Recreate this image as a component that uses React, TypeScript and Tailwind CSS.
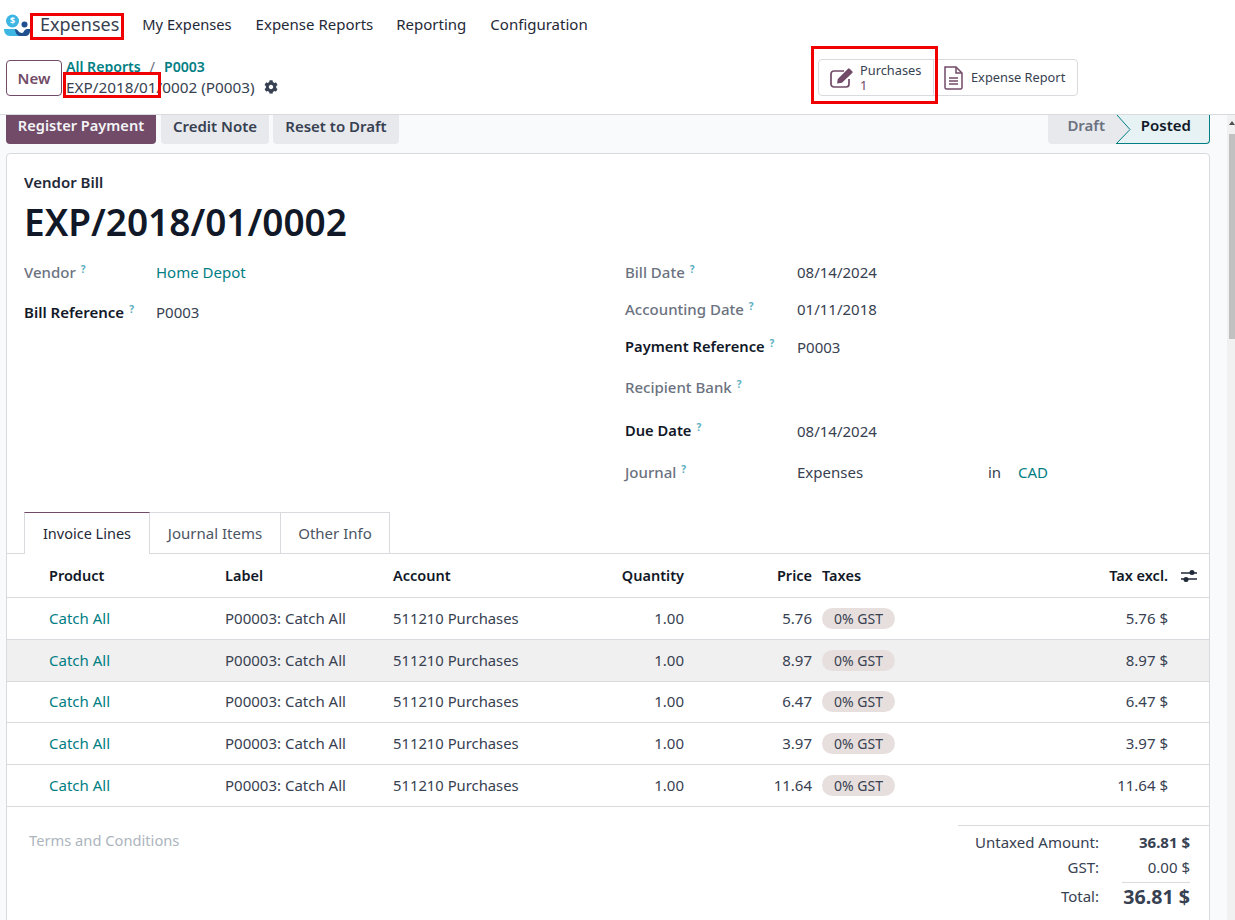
const F = "font-['Noto_Sans',sans-serif]";
const COLS = "grid-cols-[42px_176px_168px_193px_98px_128px_10px_200px_146px_41px]";

function Help() {
  return <sup className="relative -top-[5px] ml-[5px] text-[10px] font-bold text-[#5aaec0]">?</sup>;
}

function Logo() {
  return (
    <svg width="26" height="22" viewBox="0 0 26 22" className="mt-[2px] shrink-0">
      <circle cx="8.500" cy="7" r="6.500" fill="#3db6e3" />
      <text x="8.500" y="10" fontSize="9" fontWeight="700" fill="#fff" textAnchor="middle" fontFamily="Noto Sans">$</text>
      <circle cx="20.500" cy="10.500" r="3" fill="#1f4f8f" />
      <path d="M0 15 H11 C14 15 14 19 18 19 L16 22 H6 C2 22 0 19 0 15Z" fill="#3db6e3" />
      <path d="M11 15 C14 15 14 19 18 19 C20 19 20 15 23 15 H26 V17 C26 20 24 22 21 22 H16 C13 22 11 18 11 15Z" fill="#1f4f8f" />
    </svg>
  );
}

const lines = [
  ["5.76", "5.76 $", "h-[42px]", ""],
  ["8.97", "8.97 $", "h-[42px]", "bg-[#f0f0f0]"],
  ["6.47", "6.47 $", "h-[41px]", ""],
  ["3.97", "3.97 $", "h-[42px]", ""],
  ["11.64", "11.64 $", "h-[42px]", ""],
];

function Field({ label, value, bold, h }: { label: string; value?: string; bold?: boolean; h: string }) {
  return (
    <div className={`flex items-center ${h}`}>
      <div className={`w-[172px] shrink-0 whitespace-nowrap ${bold ? "pb-[2px] text-[14.7px] font-semibold text-[#111827]" : "font-medium text-[#6b7280]"}`}>
        {label}
        <Help />
      </div>
      <div className="text-[#374151]">{value}</div>
    </div>
  );
}

export default function App() {
  return (
    <div className={`${F} relative h-[920px] w-[1235px] overflow-hidden bg-white text-[15px] text-[#374151]`}>
      {/* top nav */}
      <nav className="flex h-[50px] items-center pb-[2px] pl-[4px] text-[15px] text-[#1f2937]">
        <Logo />
        <span className="ml-[10px] text-[18px] text-[#374151]">Expenses</span>
        <span className="ml-[23px] text-[14.7px]">My Expenses</span>
        <span className="ml-[24px]">Expense Reports</span>
        <span className="ml-[23px]">Reporting</span>
        <span className="ml-[24px]">Configuration</span>
      </nav>

      {/* control panel */}
      <div className="flex h-[65px] items-start border-b border-[#d8dadd]">
        <button className="ml-[6px] mt-[10px] h-[36px] w-[56px] rounded-[4px] border border-[#714b67] font-semibold text-[#714b67]">New</button>
        <div className="ml-[4px] mt-[7px] w-[752px] shrink-0 leading-[20px]">
          <div className="text-[14.1px] font-semibold text-[#017e84]">
            <span>All Reports</span>
            <span className="mx-[9px] font-normal text-[#6b7280]">/</span>
            <span>P0003</span>
          </div>
          <div className="flex items-center text-[15.3px] text-[#374151]">
            EXP/2018/01/0002 (P0003)
            <svg width="14" height="14" viewBox="0 0 512 512" className="ml-[9px]" fill="#374151">
              <path d="M487 316l-42-25c4-23 4-47 0-70l42-25c5-3 7-9 6-14-11-35-30-67-54-93-4-4-10-5-15-2l-42 24c-18-15-38-27-60-35V27c0-6-4-11-9-12-36-8-73-8-109 0-6 1-10 6-10 12v49c-22 8-42 20-60 35L92 87c-5-3-11-2-15 2-24 26-43 58-54 93-2 5 1 11 6 14l42 25c-4 23-4 47 0 70l-42 25c-5 3-7 9-6 14 11 35 30 67 54 93 4 4 10 5 15 2l42-24c18 15 38 27 60 35v49c0 6 4 11 10 12 36 8 73 8 109 0 5-1 9-6 9-12v-49c22-8 42-20 60-35l42 24c5 3 11 2 15-2 24-26 43-58 54-93 1-5-1-11-6-14zM256 336c-44 0-80-36-80-80s36-80 80-80 80 36 80 80-36 80-80 80z" />
            </svg>
          </div>
        </div>
        <div className="mt-[9px] flex h-[37px] w-[260px] shrink-0 rounded-[4px] border border-[#d8dadd] text-[12.8px]">
          <div className="flex w-[115px] shrink-0 items-center border-r border-[#d8dadd] pl-[11px] text-[#374151]">
            <svg width="24" height="20" viewBox="0 0 24 20" fill="none" className="shrink-0">
              <path d="M19 11v5a3 3 0 0 1-3 3H4a3 3 0 0 1-3-3V6a3 3 0 0 1 3-3h10" stroke="#714b67" strokeWidth="1.7" />
              <path d="M7 15.500l.8-4.500L18 .8a1.200 1.200 0 0 1 1.700 0l2.500 2.500a1.200 1.200 0 0 1 0 1.700L12 14.700z" fill="#714b67" />
            </svg>
            <div className="ml-[6px] pt-[1px] leading-[15px]">
              <div>Purchases</div>
              <div className="text-[#714b67]">1</div>
            </div>
          </div>
          <div className="flex flex-1 items-center pl-[9px] text-[#374151]">
            <svg width="21" height="24" viewBox="0 0 21 24" fill="none" stroke="#714b67" strokeWidth="1.500" className="shrink-0">
              <path d="M2 1h11l6 6v14.500a1.500 1.500 0 0 1-1.500 1.500H3.500A1.500 1.500 0 0 1 2 21.500z" />
              <path d="M13 1v6h6M6 12h9M6 15h9M6 18h9" />
            </svg>
            <span className="ml-[7px]">Expense Report</span>
          </div>
        </div>
      </div>

      {/* scrollable content */}
      <div className="flex h-[805px]">
        <main className="relative h-full w-[1227px] bg-[#f9fafb]">
          <div className="flex h-[29px] justify-between pl-[6px] pr-[17px]">
            <div className="flex gap-[4px] font-semibold">
              <button className="mr-[1px] h-[29px] w-[150px] rounded-b-[4px] bg-[#714b67] pb-[7px] text-[14.6px] text-[#f3f4f6]">Register Payment</button>
              <button className="h-[29px] w-[108px] rounded-b-[4px] bg-[#e7e9ed] pb-[7px] text-[#374151]">Credit Note</button>
              <button className="h-[29px] w-[126px] rounded-b-[4px] bg-[#e7e9ed] pb-[7px] text-[#374151]">Reset to Draft</button>
            </div>
            <div className="flex h-[29px] w-[162px] font-semibold">
              <div className="flex w-[69px] items-center justify-end rounded-bl-[4px] bg-[#e7e9ed] pb-[9px] pr-[12px] text-[#6b7280]">Draft</div>
              <div className="relative flex flex-1 items-center justify-end rounded-br-[4px] border-b border-r border-[#017e84] bg-[#e6f2f3] pb-[7px] pr-[18px] text-[#111827]">
                <svg width="15" height="29" viewBox="0 0 15 29" className="absolute -left-px top-0">
                  <path d="M0 0 H1 L14 14.500 L0 29Z" fill="#e7e9ed" />
                  <path d="M1 0 L14 14.500 L0 29" fill="none" stroke="#017e84" />
                </svg>
                Posted
              </div>
            </div>
          </div>

          {/* sheet */}
          <div className="ml-[6px] mt-[9px] h-[780px] w-[1204px] rounded-t-[4px] border border-[#d8dadd] bg-white">
            <div className="px-[17px] pt-[20px]">
              <div className="font-semibold leading-[17px] text-[#1f2937]">Vendor Bill</div>
              <div className="mt-[6px] text-[37px] font-semibold leading-[50px] text-[#111827]">EXP/2018/01/0002</div>
              <div className="mt-[6px] flex">
                <div className="w-[601px] shrink-0">
                  <div className="flex h-[38px] items-center pt-[1px]">
                    <div className="w-[132px] font-medium text-[#6b7280]">Vendor<Help /></div>
                    <div className="text-[#017e84]">Home Depot</div>
                  </div>
                  <div className="flex h-[40px] items-center pt-[3px]">
                    <div className="w-[132px] font-semibold text-[#111827]">Bill Reference<Help /></div>
                    <div>P0003</div>
                  </div>
                </div>
                <div className="flex-1">
                  <Field label="Bill Date" value="08/14/2024" h="h-[38px]" />
                  <Field label="Accounting Date" value="01/11/2018" h="h-[37px]" />
                  <Field label="Payment Reference" value="P0003" bold h="h-[38px]" />
                  <Field label="Recipient Bank" h="h-[42px]" />
                  <Field label="Due Date" value="08/14/2024" bold h="h-[46px]" />
                  <div className="flex h-[37px] items-center">
                    <div className="w-[172px] shrink-0 font-medium text-[#6b7280]">Journal<Help /></div>
                    <div className="w-[191px]">Expenses</div>
                    <div className="w-[30px]">in</div>
                    <div className="text-[#017e84]">CAD</div>
                  </div>
                </div>
              </div>
            </div>

            {/* tabs */}
            <div className="mt-[21px] flex h-[42px] border-b border-[#d8dadd] pl-[17px]">
              <div className="flex h-[42px] w-[126px] items-center justify-center border-x border-t border-x-[#d8dadd] border-t-[#714b67] bg-white text-[14.5px] text-[#1f2937]">Invoice Lines</div>
              <div className="flex h-[41px] w-[131px] items-center justify-center border-r border-t border-[#d8dadd] text-[#4b5563]">Journal Items</div>
              <div className="flex h-[41px] w-[109px] items-center justify-center border-r border-t border-[#d8dadd] text-[#4b5563]">Other Info</div>
            </div>

            {/* table */}
            <div className={`grid h-[44px] ${COLS} items-center border-b border-[#d8dadd] text-[14.5px] font-semibold text-[#111827]`}>
              <div />
              <div>Product</div>
              <div>Label</div>
              <div>Account</div>
              <div className="text-right">Quantity</div>
              <div className="text-right">Price</div>
              <div />
              <div>Taxes</div>
              <div className="text-right">Tax excl.</div>
              <div className="pl-[13px]">
                <svg width="16" height="14" viewBox="0 0 16 14" stroke="#1f2937" fill="#1f2937" className="block">
                  <path d="M0 4h16M0 10h16" strokeWidth="1.300" />
                  <circle cx="11" cy="3.500" r="2.500" stroke="none" />
                  <circle cx="5" cy="10.500" r="2.500" stroke="none" />
                </svg>
              </div>
            </div>
            {lines.map(([p, t, h, bg], i) => (
              <div key={i} className={`grid ${h} ${bg} ${COLS} items-center border-b border-[#d8dadd] pb-[1px]`}>
                <div />
                <div className="text-[#017e84]">Catch All</div>
                <div className="whitespace-nowrap">P00003: Catch All</div>
                <div className="whitespace-nowrap text-[14.8px]">511210 Purchases</div>
                <div className="text-right">1.00</div>
                <div className="text-right">{p}</div>
                <div />
                <div>
                  <span className="flex h-[21px] w-[73px] items-center justify-center rounded-full bg-[#e7dfdd] text-[14px]">0% GST</span>
                </div>
                <div className="text-right">{t}</div>
                <div />
              </div>
            ))}

            {/* footer */}
            <div className="flex justify-between pl-[22px]">
              <div className="mt-[22px] text-[14.7px] text-[#adb5bd]">Terms and Conditions</div>
              <div className="mt-[18px] w-[251px] border-t border-[#d8dadd] pr-[19px] pt-[3px] text-right">
                <div className="flex h-[26px] items-center justify-end">
                  <span>Untaxed Amount:</span>
                  <span className="w-[91px] text-[15px] font-bold">36.81 $</span>
                </div>
                <div className="flex h-[25px] items-center justify-end">
                  <span>GST:</span>
                  <span className="w-[91px]">0.00 $</span>
                </div>
                <div className="flex h-[32px] items-center justify-end">
                  <span>Total:</span>
                  <span className="ml-[23px] w-[68px] whitespace-nowrap border-t border-[#d8dadd] text-[19.6px] font-bold leading-[28px]">36.81 $</span>
                </div>
              </div>
            </div>
          </div>
        </main>
        {/* scrollbar */}
        <div className="relative h-full w-[8px] bg-[#f1f1f1]">
          <div className="ml-[2px] mt-[19px] h-[205px] w-[6px] bg-[#c1c1c1]" />
          <div className="absolute left-[2px] top-[6px] h-0 w-0 border-x-[3px] border-b-[4px] border-x-transparent border-b-[#505050]" />
        </div>
      </div>

      {/* annotations */}
      <div className="pointer-events-none absolute left-[30px] top-[13px] h-[27px] w-[94px] border-[3px] border-[#f00000]" />
      <div className="pointer-events-none absolute left-[63px] top-[72px] h-[26px] w-[98px] border-[3px] border-[#f00000]" />
      <div className="pointer-events-none absolute left-[811px] top-[46px] h-[58px] w-[127px] border-[3px] border-[#f00000]" />
    </div>
  );
}
